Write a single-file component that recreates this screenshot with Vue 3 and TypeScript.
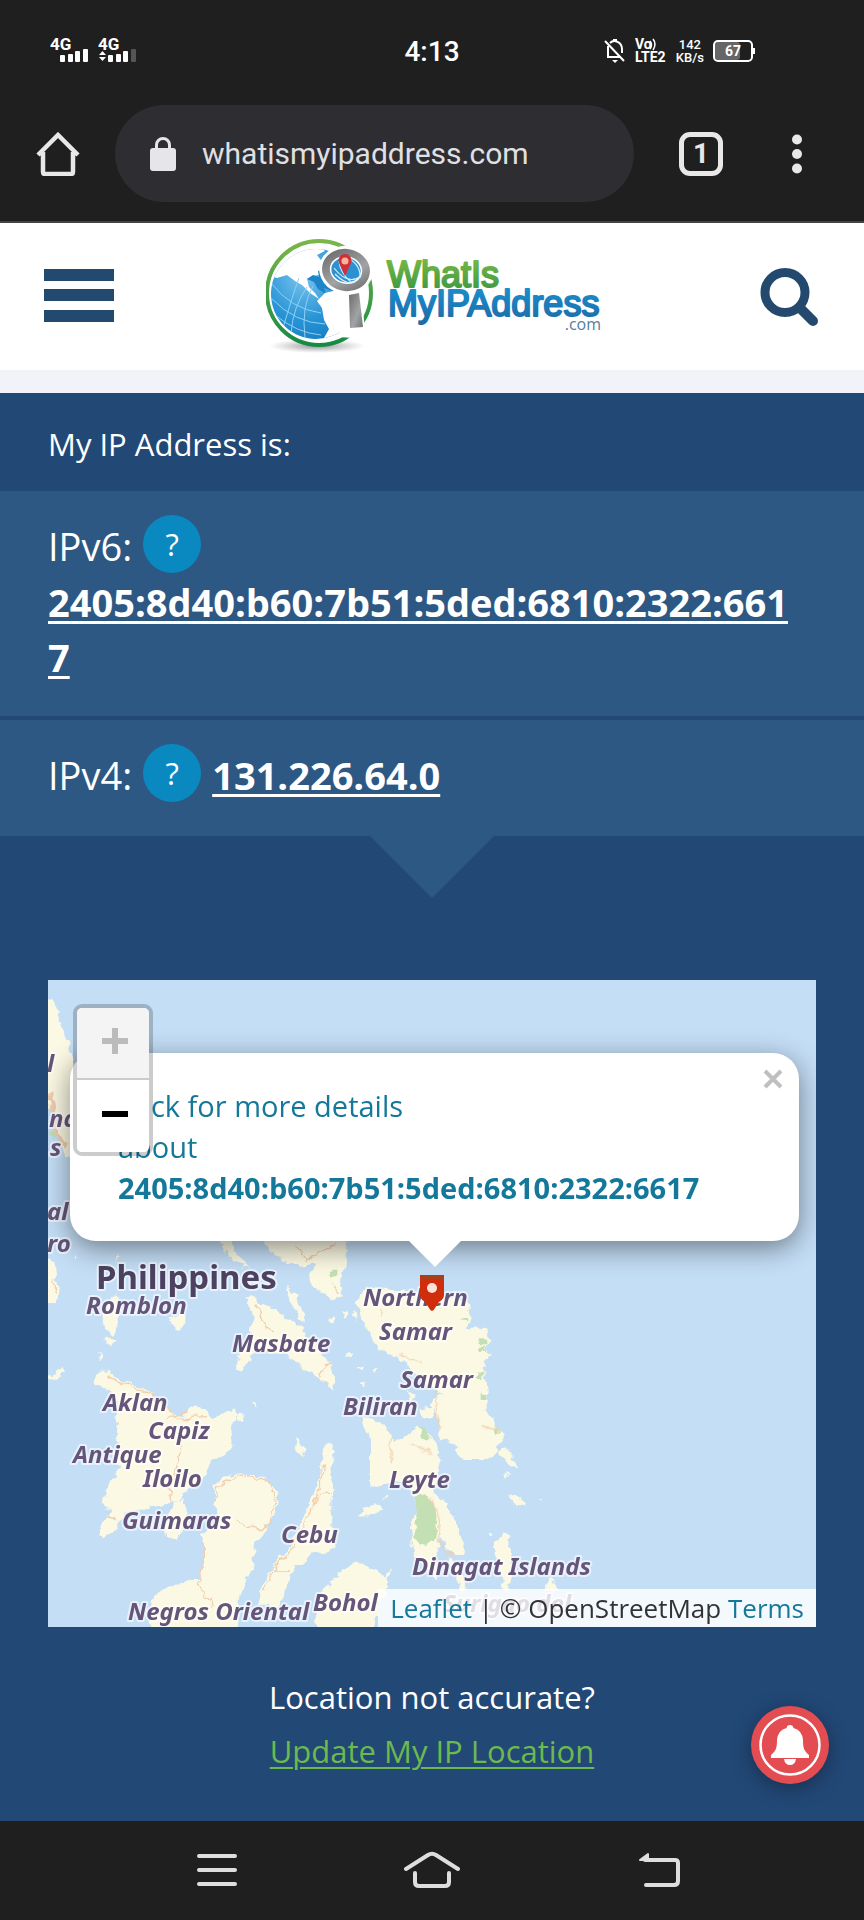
<script setup lang="ts">
import { ref } from 'vue'

interface MapLabel { text: string; x: number; y: number }

const url = ref('whatismyipaddress.com')
const popupOpen = ref(true)
const ipv6 = '2405:8d40:b60:7b51:5ded:6810:2322:6617'
const ipv4 = '131.226.64.0'

const labels: MapLabel[] = [
  { text: 'l', x: 47, y: 1072 },
  { text: 'nd', x: 49, y: 1127 },
  { text: 's', x: 50, y: 1156 },
  { text: 'al', x: 47, y: 1220 },
  { text: 'ro', x: 47, y: 1252 },
  { text: 'Romblon', x: 86, y: 1314 },
  { text: 'Masbate', x: 232, y: 1352 },
  { text: 'Aklan', x: 103, y: 1411 },
  { text: 'Capiz', x: 148, y: 1439 },
  { text: 'Antique', x: 73, y: 1463 },
  { text: 'Iloilo', x: 143, y: 1487 },
  { text: 'Guimaras', x: 122, y: 1529 },
  { text: 'Cebu', x: 281, y: 1543 },
  { text: 'Negros Oriental', x: 128, y: 1620 },
  { text: 'Bohol', x: 313, y: 1611 },
  { text: 'Northern', x: 363, y: 1306 },
  { text: 'Samar', x: 379, y: 1340 },
  { text: 'Samar', x: 400, y: 1388 },
  { text: 'Biliran', x: 343, y: 1415 },
  { text: 'Leyte', x: 389, y: 1488 },
  { text: 'Dinagat Islands', x: 412, y: 1575 },
  { text: 'Surigao del', x: 443, y: 1612 },
]
</script>

<template>
  <div class="screen">
    <div class="status">
      <div class="status-left">
        <svg width="40" height="36" viewBox="0 -4 40 36" aria-label="Signal, SIM 1">
          <text x="0" y="13" class="tiny g">4G</text>
          <g fill="#fff"><rect x="10" y="18" width="5" height="7" rx="1" /><rect x="18" y="17" width="5" height="8" rx="1" /><rect x="25" y="14" width="5" height="11" rx="1" /><rect x="33" y="12" width="5" height="13" rx="1" /></g>
        </svg>
        <svg width="40" height="36" viewBox="0 -4 40 36" aria-label="Signal, SIM 2">
          <text x="0" y="13" class="tiny g">4G</text>
          <path d="M1 18l3.500-4 3.500 4zM1 20l3.500 4 3.500-4z" fill="#fff" />
          <g fill="#fff"><rect x="10" y="18" width="5" height="7" rx="1" /><rect x="18" y="17" width="5" height="8" rx="1" /><rect x="25" y="14" width="5" height="11" rx="1" /><rect x="33" y="12" width="5" height="13" rx="1" fill="#555" /></g>
        </svg>
      </div>
      <time class="clock">4:13</time>
      <div class="status-right">
        <svg width="22" height="26" viewBox="0 0 22 26" fill="none" stroke="#fff" stroke-width="2">
          <path d="M1 3L20 23M4 8v11h13M6 5c4-4 12-1 12 6v4" />
          <path d="M8 22h6l-3 3z" fill="#fff" stroke="none" />
          <path d="M9 2.500h4" stroke-width="3" />
        </svg>
        <svg width="32" height="28" viewBox="0 -1 32 28">
          <text x="0" y="11" class="tiny v">Vo</text>
          <path d="M15 3q3 4 0 8M18 1q4 5 0 11" fill="none" stroke="#fff" stroke-width="1.500" />
          <text x="0" y="24" class="tiny v">LTE2</text>
        </svg>
        <div class="speed"><span>142</span><span>KB/s</span></div>
        <svg width="43" height="24" viewBox="0 0 43 24">
          <rect x="2" y="3" width="25" height="18" rx="3" fill="#666" />
          <rect x="1" y="2" width="38" height="20" rx="4" fill="none" stroke="#fff" stroke-width="2" />
          <rect x="40" y="9" width="2" height="6" fill="#fff" />
          <text x="20" y="17" text-anchor="middle" class="tiny v">67</text>
        </svg>
      </div>
    </div>

    <div class="toolbar">
      <button class="icon-btn" aria-label="Home">
        <svg width="44" height="44" viewBox="0 0 44 44" fill="none" stroke="#e8e8e8" stroke-width="4.500">
          <path d="M2 23L22 3l20 20M7 20v20q0 2 2 2h26q2 0 2-2V20" />
        </svg>
      </button>
      <label class="omnibox">
        <svg width="26" height="34" viewBox="0 0 26 34">
          <rect x="0" y="11" width="26" height="23" rx="3" fill="#e6e6ea" />
          <path d="M6.500 12V8a6.500 6.500 0 0 1 13 0v4" fill="none" stroke="#e6e6ea" stroke-width="3" />
        </svg>
        <input v-model="url" type="text" aria-label="Address" />
      </label>
      <button class="tabs" aria-label="Open tabs">1</button>
      <button class="icon-btn dots" aria-label="More options">
        <svg width="10" height="40" viewBox="0 0 10 40" fill="#e8e8e8"><circle cx="5" cy="5.500" r="5" /><circle cx="5" cy="20" r="5" /><circle cx="5" cy="34.500" r="5" /></svg>
      </button>
    </div>

    <header class="site-header">
      <button class="icon-btn" aria-label="Menu">
        <svg width="70" height="55" viewBox="0 0 70 55" fill="#23496f"><rect width="70" height="12" /><rect y="20" width="70" height="12" /><rect y="41" width="70" height="12" /></svg>
      </button>
      <a href="#" class="logo" aria-label="WhatIsMyIPAddress.com">
        <svg width="342" height="124" viewBox="3 2 342 124">
          <defs>
            <linearGradient id="ring" x1="0" y1="0" x2="0" y2="1"><stop offset="0" stop-color="#7ab648" /><stop offset="1" stop-color="#158a45" /></linearGradient>
            <radialGradient id="sea" cx=".35" cy=".3" r=".8"><stop offset="0" stop-color="#7cc4ee" /><stop offset=".5" stop-color="#2794d6" /><stop offset="1" stop-color="#0d6cb5" /></radialGradient>
            <linearGradient id="metal" x1="0" y1="0" x2="1" y2="1"><stop offset="0" stop-color="#6c6c6e" /><stop offset=".6" stop-color="#a2a3a5" /><stop offset="1" stop-color="#707173" /></linearGradient>
            <linearGradient id="green" x1="0" y1="0" x2="0" y2="1"><stop offset="0" stop-color="#7fbd42" /><stop offset="1" stop-color="#359447" /></linearGradient>
            <linearGradient id="blue" x1="0" y1="0" x2="0" y2="1"><stop offset="0" stop-color="#1a92d2" /><stop offset="1" stop-color="#1c6ba6" /></linearGradient>
            <radialGradient id="shade"><stop offset="0" stop-color="#777" stop-opacity=".8" /><stop offset="1" stop-color="#999" stop-opacity="0" /></radialGradient>
            <clipPath id="ball"><circle cx="53" cy="61" r="45" /></clipPath>
          </defs>
          <ellipse cx="54" cy="113" rx="48" ry="7" fill="url(#shade)" />
          <circle cx="56" cy="60" r="52" fill="#fff" stroke="url(#ring)" stroke-width="4" />
          <g clip-path="url(#ball)">
            <rect x="5" y="10" width="100" height="110" fill="url(#sea)" />
            <path d="M10 44Q14 18 36 14L56 12 62 18 54 22 60 30 66 40 50 43 44 46 46 54 52 60 56 66 47 60 39 52 32 48 24 42 14 45z" fill="#fff" />
            <path d="M44 46l6-4 6 2-1-6 5-2 3 8 6 8 8 2-8 4-8-3 2 6-8-5-4-7z" fill="#1c84c8" />
            <path d="M62 60l12-3 12 4 5 6v30l-10 3-9 6-8 5-3-6 5-9-5-9-2-12-5-7z" fill="#fff" />
            <g fill="none" stroke="#8fd0f2" stroke-width="1">
              <path d="M8 65q24 25 54 26M8 50q20 26 50 30M20 95q10-34 16-50M42 105q-4-32 8-52M12 82q22 18 46 20M28 100q2-26 16-46" />
            </g>
          </g>
          <path d="M80 60l18-3 4 40-12 8-14-1z" fill="#fff" />
          <path d="M86 62l10-2 4 34-13 1z" fill="url(#metal)" />
          <g transform="rotate(12 83 37)">
            <ellipse cx="83" cy="37" rx="27" ry="24" fill="#fff" />
            <ellipse cx="83" cy="37" rx="20" ry="17" fill="#2b91d0" stroke="url(#metal)" stroke-width="8" />
            <ellipse cx="83" cy="37" rx="15.500" ry="13" fill="none" stroke="#fff" stroke-width="1.500" />
          </g>
          <path d="M71 35q14 18 27 8M72 41q12 12 20 8M85 25q13 7 12 20M76 28q1 12 12 21" fill="none" stroke="#d7effb" stroke-width="1.200" />
          <path d="M82 43L76 30a6.500 6.500 0 1 1 12 0z" fill="#d12f35" />
          <circle cx="82" cy="28" r="3.500" fill="#f5b49b" />
          <text x="124" y="54" class="brand" fill="url(#green)" stroke="url(#green)">WhatIs</text>
          <text x="125" y="83" class="brand" fill="url(#blue)" stroke="url(#blue)">MyIPAddress</text>
          <text x="338" y="97" text-anchor="end" class="dotcom">.com</text>
        </svg>
      </a>
      <button class="icon-btn" aria-label="Search">
        <svg width="58" height="58" viewBox="0 0 58 58" fill="none" stroke="#23496f"><circle cx="25" cy="24.500" r="20" stroke-width="9" /><path d="M40 40l13 13" stroke-width="10" stroke-linecap="round" /></svg>
      </button>
    </header>
    <div class="strip"></div>

    <main class="content">
      <h1 class="title">My IP Address is:</h1>
      <section class="panel">
        <div class="row"><span class="kind">IPv6:</span><button class="help" aria-label="About IPv6">?</button></div>
        <a href="#" class="ip long">{{ ipv6 }}</a>
      </section>
      <section class="panel last">
        <div class="row"><span class="kind">IPv4:</span><button class="help" aria-label="About IPv4">?</button><a href="#" class="ip">{{ ipv4 }}</a></div>
      </section>

      <div class="map">
        <svg class="tiles" viewBox="48 980 768 647" preserveAspectRatio="xMidYMid slice">
          <defs>
            <filter id="coast" x="-5%" y="-5%" width="110%" height="110%">
              <feTurbulence type="fractalNoise" baseFrequency=".12" numOctaves="2" seed="4" result="n" />
              <feDisplacementMap in="SourceGraphic" in2="n" scale="9" xChannelSelector="R" yChannelSelector="G" />
            </filter>
          </defs>
          <rect x="48" y="980" width="768" height="647" fill="#c4def6" />
          <g filter="url(#coast)">
            <g transform="translate(40 970) scale(.33333)" fill="#fbf9e3">
              <path d="M10 80L30 90 48 110 60 160 80 210 98 260 120 300V560H75L60 520 45 430 10 400z" />
              <path d="M10 860L40 870 48 930 60 970 40 1000H10z" />
            </g>
            <g transform="translate(40 1230) scale(.33333)" fill="#fbf9e3">
              <path d="M10 90L38 95 45 160 60 190 40 215 10 225zM25 435L45 438 60 405 70 425 50 452 25 450z" />
              <path d="M160 465L175 425 205 425 250 455 330 485 385 545 430 560 450 525 490 535 520 565 585 535 590 560 570 590 575 640 560 665 520 690 490 735 440 790 400 820 320 835 250 855 230 890 200 925 180 915 190 870 215 850 188 810 215 750 240 715 225 690 235 600 225 560 240 530 210 480z" />
              <path d="M400 820L430 805 445 850 440 890 410 925 378 922 375 890z" />
              <path d="M520 770L545 745 600 730 680 745 715 790 705 850 680 895 645 940 640 1000 620 1050 600 1100 590 1200H330L335 1110 370 1070 430 1060 480 1040 490 1000 490 940 480 915 520 890 535 850 525 820z" />
              <path d="M850 650L878 638 880 680 868 720 880 780 875 860 882 950 850 980 820 970 770 1010 745 1040 735 1090 715 1130H660L665 1060 700 1010 750 950 800 840 840 740z" />
              <path d="M615 200L640 205 700 240 770 280 830 350 870 400 885 450 880 480 850 450 800 425 770 400 740 380 700 365 650 365 600 420 585 415 600 380 630 320 640 260z" />
              <path d="M185 270L220 190 240 200 235 290 215 320zM195 325L230 330 210 352zM385 270L435 240 432 290 410 300z" />
              <path d="M735 165L765 200 785 240 792 275 770 255 750 215zM520 10H560L590 70 628 115 600 105 560 70z" />
              <path d="M640 10H925L915 100 900 150 905 200 885 215 850 190 815 170 810 130 830 100 780 108 740 95 690 60z" />
              <path d="M760 655L770 625 797 660 785 682zM590 560L610 555 615 575 600 575zM640 515L652 520 648 540zM865 262L890 268 880 280zM170 370l20 2-8 18zM105 70l12 12-8 10zM228 72l14 10-12 14z" />
              <path d="M825 1115L870 1060 900 1030 940 1000 990 1010 1040 1045 1045 1070 1020 1120 1000 1200H830z" />
            </g>
            <g transform="translate(320 1230) scale(.33333)" fill="#fbf9e3">
              <path d="M140 165L180 175 300 190 440 210 452 270 440 290 500 300 515 330 495 360 515 370 490 400 500 480 500 540 530 590 552 610 540 640 520 680 490 690 430 690 410 660 390 635 360 630 350 610 355 560 330 520 370 490 310 460 280 420 230 380 170 350 140 300 120 240 110 215z" />
              <path d="M530 665L560 655 600 720 575 710 555 690zM555 730l14 6-10 6zM565 790L590 800 622 825 600 832 575 815zM655 805l14 2-6 8z" />
              <path d="M120 560L160 570 205 590 210 625 250 630 290 590 330 615 350 640 360 700 355 740 340 790 365 810 400 860 415 900 435 930 430 975 400 975 372 940 360 920 350 970 357 1050 320 1010 285 980 275 940 270 890 290 840 280 780 230 750 180 770 150 765 150 640z" />
              <path d="M300 535L340 530 345 560 310 570zM260 480L285 500 270 515zM115 860L125 835 170 822 190 840 150 855zM185 812L200 790 208 796zM60 240l22 5-8 20zM95 250l18 6-6 14zM20 270l25-8-5 14zM75 370l20-6-6 18zM112 415l20-6-8 18zM155 420l18 0-8 12zM118 462l18-4-6 12z" />
              <path d="M520 950L555 905 570 950 576 1010 565 1085 550 1070 540 1010zM385 980L410 1000 440 1080 420 1075zM690 1040L722 1082H668zM503 908l14 2-8 8zM190 1040l24-20-8 20z" />
            </g>
          </g>
          <g filter="url(#coast)" fill="#c3dfb4">
            <g transform="translate(320 1230) scale(.33333)">
              <path d="M285 800L320 790 345 830 352 870 345 930 310 942 278 920 290 870zM288 590L310 595 338 630 318 635z" />
              <path d="M482 325h20v18h-20zM474 350h22v10h-22zM470 425h20v22h-20zM482 488h16v22h-16zM430 268h12v8h-12zM30 122h22v20h-22zM525 598h14v14h-14z" />
            </g>
            <circle cx="54" cy="1132" r="5" />
          </g>
          <g filter="url(#coast)" fill="none" stroke="#f1cdae" stroke-width="4">
            <g transform="translate(40 1230) scale(.33333)">
              <path d="M205 440L270 470 340 495 400 560 440 545M425 600L420 680 390 770 395 820M200 850L230 870M380 565L500 560M525 820L530 770 600 735 690 755 705 800 690 880 650 900 590 870M490 940L490 1000 475 1060 520 1130M855 700L830 800 760 950 700 1020 670 1080M840 790H875M700 1020H750M650 220L670 280 700 310M830 440L870 400M770 45L800 90 890 40M880 160L895 190" />
              <path d="M40 150L50 190" />
            </g>
            <g transform="translate(320 1230) scale(.33333)">
              <path d="M240 375L300 400M350 480L355 600M210 625L215 700M270 640L340 670M330 800L360 860 355 930 400 980M490 590L540 600M180 240v20" />
            </g>
            <path d="M50 1092l5 40 12 15" />
          </g>
          <text x="96" y="1289" class="country">Philippines</text>
          <text v-for="(l, i) in labels" :key="i" :x="l.x" :y="l.y" class="place">{{ l.text }}</text>
          <path d="M420 1275h24v20q0 4-5 7l-4 6q-3 6-6 0l-4-6q-5-3-5-7z" fill="#cf2d0c" />
          <path d="M421 1277h22" stroke="#a8411c" stroke-width="4" />
          <circle cx="432" cy="1288" r="5" fill="#fbe3da" />
        </svg>

        <div v-if="popupOpen" class="popup">
          <a href="#" class="popup-link">Click for more details<br />about<br /><strong>{{ ipv6 }}</strong></a>
          <button class="close" aria-label="Close popup" @click="popupOpen = false">
            <svg width="20" height="20" viewBox="0 0 20 20" stroke="#bfbfbf" stroke-width="4"><path d="M2 2l16 16M18 2L2 18" /></svg>
          </button>
          <svg class="tip" width="52" height="26" viewBox="0 0 52 26"><path d="M0 0h52L26 26z" fill="#fff" /></svg>
        </div>

        <div class="zoom">
          <button class="zoom-in" aria-label="Zoom in" disabled><svg width="26" height="26" viewBox="0 0 26 26" fill="#bbb"><path d="M10 0h6v10h10v6H16v10h-6V16H0v-6h10z" /></svg></button>
          <button aria-label="Zoom out"><svg width="26" height="26" viewBox="0 0 26 26"><rect y="10" width="26" height="6" /></svg></button>
        </div>

        <div class="attribution"><a href="#">Leaflet</a> | © OpenStreetMap <a href="#">Terms</a></div>
      </div>

      <div class="accuracy">
        <p>Location not accurate?</p>
        <a href="#">Update My IP Location</a>
      </div>

      <button class="bell" aria-label="Notifications">
        <svg width="78" height="78" viewBox="0 0 78 78">
          <circle cx="39" cy="39" r="39" fill="#e34c50" />
          <circle cx="39" cy="39" r="29.500" fill="none" stroke="#fff" stroke-width="2.500" />
          <path d="M39 19q3 0 3.500 3Q51 24 52 34c0 8 1 11 6 15v3H20v-3c5-4 6-7 6-15Q27 24 35.500 22q.5-3 3.500-3zM33 53h12q-1 6-6 6t-6-6z" fill="#fff" />
        </svg>
      </button>
    </main>

    <nav class="sysnav">
      <button class="icon-btn recent" aria-label="Recent apps"><svg width="42" height="34" viewBox="0 0 42 34" stroke="#dedede" stroke-width="4" stroke-linecap="round"><path d="M3 3h36M3 17h36M3 31h36" /></svg></button>
      <button class="icon-btn" aria-label="System home"><svg width="58" height="38" viewBox="0 0 58 38" fill="none" stroke="#dedede" stroke-width="4" stroke-linecap="round" stroke-linejoin="round"><path d="M3 18L25 4q4-2.500 8 0L55 18M12 22v9q0 4 4 4h26q4 0 4-4V22" /></svg></button>
      <button class="icon-btn back" aria-label="Back"><svg width="44" height="36" viewBox="0 0 44 36" fill="none" stroke="#dedede" stroke-width="4" stroke-linecap="round" stroke-linejoin="round"><path d="M8 8h30q3 0 3 3v18q0 4-4 4H9" /><path d="M3 8l8-6v6z" fill="#dedede" stroke-width="2" /></svg></button>
    </nav>
  </div>
</template>

<style>
body {
  margin: 0;
  background: #1f1f1f;
}
</style>

<style scoped>
.screen {
  display: flex;
  flex-direction: column;
  min-height: 100vh;
  font-family: "Open Sans", "Noto Sans", sans-serif;
  background: #224876;
  color: #fff;
}
svg {
  display: block;
}
button {
  font: inherit;
  color: inherit;
  border: 0;
  padding: 0;
  background: none;
  cursor: pointer;
}
.icon-btn {
  flex: none;
}
.status {
  display: grid;
  grid-template-columns: 1fr auto 1fr;
  align-items: center;
  height: 102px;
  background: #1f1f1f;
  font-family: Roboto, sans-serif;
}
.status-left {
  display: flex;
  gap: 8px;
  padding-left: 50px;
}
.status-right {
  display: flex;
  align-items: center;
  justify-content: flex-end;
  gap: 9px;
  padding-right: 108px;
}
.clock {
  font-size: 28px;
  font-weight: 500;
}
.tiny {
  font-family: Roboto, sans-serif;
  font-weight: 700;
  fill: #fff;
}
.g {
  font-size: 17px;
}
.v {
  font-size: 14px;
}
.speed {
  display: flex;
  flex-direction: column;
  align-items: center;
  font-size: 13px;
  line-height: 13px;
  font-weight: 500;
}
.toolbar {
  display: flex;
  align-items: center;
  padding: 3px 62px 19px 36px;
  background: #1f1f1f;
  border-bottom: 2px solid #444;
}
.omnibox {
  flex: 1;
  min-width: 0;
  display: flex;
  align-items: center;
  gap: 26px;
  height: 97px;
  margin: 0 45px 0 35px;
  padding: 0 35px;
  box-sizing: border-box;
  border-radius: 49px;
  background: #2d2d32;
}
.omnibox input {
  flex: 1;
  min-width: 0;
  padding: 0;
  border: 0;
  outline: 0;
  background: none;
  color: #e0e0e4;
  font: 400 30px Roboto, sans-serif;
}
.tabs {
  width: 44px;
  height: 44px;
  box-sizing: border-box;
  border: 5px solid #e8e8e8;
  border-radius: 11px;
  color: #e8e8e8;
  font: 700 28px/34px Roboto, sans-serif;
}
.dots {
  margin-left: 69px;
}
.site-header {
  display: flex;
  align-items: center;
  justify-content: space-between;
  height: 147px;
  padding: 0 46px 0 44px;
  background: #fff;
}
.brand {
  font-family: "Liberation Sans", Arial, sans-serif;
  font-size: 36px;
  stroke-width: 2px;
  stroke-linejoin: round;
}
.dotcom {
  font-family: "Open Sans", sans-serif;
  font-size: 16px;
  fill: #55809c;
}
.strip {
  height: 23px;
  background: #f1f3f8;
}
.content {
  position: relative;
  flex: 1;
}
.title {
  margin: 0;
  padding: 28px 48px 24px;
  font-size: 31px;
  line-height: 46px;
  font-weight: 400;
}
.panel {
  position: relative;
  padding: 24px 60px 31px 48px;
  background: #2d5883;
  font-size: 38px;
}
.last {
  margin-top: 4px;
  padding-bottom: 34px;
}
.last::after {
  content: "";
  position: absolute;
  top: 100%;
  left: 50%;
  margin-left: -62px;
  border: 62px solid transparent;
  border-top-color: #2d5883;
  border-bottom: 0;
}
.row {
  display: flex;
  align-items: center;
  gap: 11px;
  line-height: 54px;
}
.kind,
.row .ip {
  padding-top: 4px;
}
.help {
  width: 58px;
  height: 58px;
  border-radius: 50%;
  background: #0a89c1;
  font-size: 31px;
}
.ip {
  color: #fff;
  font-weight: 700;
  text-decoration: underline;
  text-decoration-thickness: 3px;
  text-underline-offset: 4px;
}
.long {
  display: block;
  margin-top: 2px;
  line-height: 55px;
  word-break: break-all;
}
.map {
  position: relative;
  margin: 144px 48px 0;
  aspect-ratio: 768 / 647;
  overflow: hidden;
  background: #c4def6;
}
.tiles {
  width: 100%;
  height: 100%;
}
.place,
.country {
  font-family: "Noto Sans", "Open Sans", sans-serif;
  font-weight: 700;
  fill: #66557a;
  stroke: #fff;
  stroke-opacity: 0.6;
  stroke-width: 4px;
  stroke-linejoin: round;
  paint-order: stroke;
}
.place {
  font-size: 24px;
  font-style: italic;
}
.country {
  font-size: 33px;
  fill: #4d4261;
}
.popup {
  position: absolute;
  top: 73px;
  left: 22px;
  right: 17px;
  padding: 32px 48px 33px;
  background: #fff;
  border-radius: 26px;
  box-shadow: 0 7px 28px rgba(0, 0, 0, 0.45);
}
.popup-link {
  display: block;
  font-size: 29px;
  line-height: 41px;
  color: #14789a;
  text-decoration: none;
}
.close {
  position: absolute;
  top: 16px;
  right: 16px;
}
.tip {
  position: absolute;
  top: 100%;
  left: 50%;
  margin-left: -26px;
}
.zoom {
  position: absolute;
  top: 24px;
  left: 25px;
  display: flex;
  flex-direction: column;
  border: 4px solid rgba(0, 0, 0, 0.2);
  border-radius: 9px;
  background-clip: padding-box;
}
.zoom button {
  display: grid;
  place-items: center;
  box-sizing: border-box;
  width: 72px;
  height: 72px;
  padding: 0 0 4px 4px;
  background: #fff;
  border-radius: 0 0 5px 5px;
}
.zoom .zoom-in {
  border-bottom: 2px solid #ccc;
  border-radius: 5px 5px 0 0;
  background: #f4f4f4;
}
.attribution {
  position: absolute;
  right: 0;
  bottom: 0;
  padding: 0 12px;
  font-size: 26px;
  line-height: 38px;
  white-space: nowrap;
  color: #333;
  background: rgba(255, 255, 255, 0.8);
}
.attribution a {
  color: #14789a;
  text-decoration: none;
}
.accuracy {
  padding: 43px 48px;
  font-size: 31px;
  line-height: 54px;
  text-align: center;
}
.accuracy p {
  margin: 0;
}
.accuracy a {
  color: #6cb94e;
  text-decoration-thickness: 2px;
  text-underline-offset: 4px;
}
.bell {
  position: absolute;
  right: 35px;
  bottom: 37px;
  border-radius: 50%;
  box-shadow: 0 4px 20px rgba(0, 0, 0, 0.35);
}
.sysnav {
  display: grid;
  grid-template-columns: 1fr auto 1fr;
  align-items: center;
  height: 99px;
  padding-bottom: 2px;
  box-sizing: border-box;
  background: #1f1f1f;
}
.recent {
  justify-self: start;
  margin-left: 196px;
}
.back {
  justify-self: end;
  margin-right: 183px;
}
</style>
